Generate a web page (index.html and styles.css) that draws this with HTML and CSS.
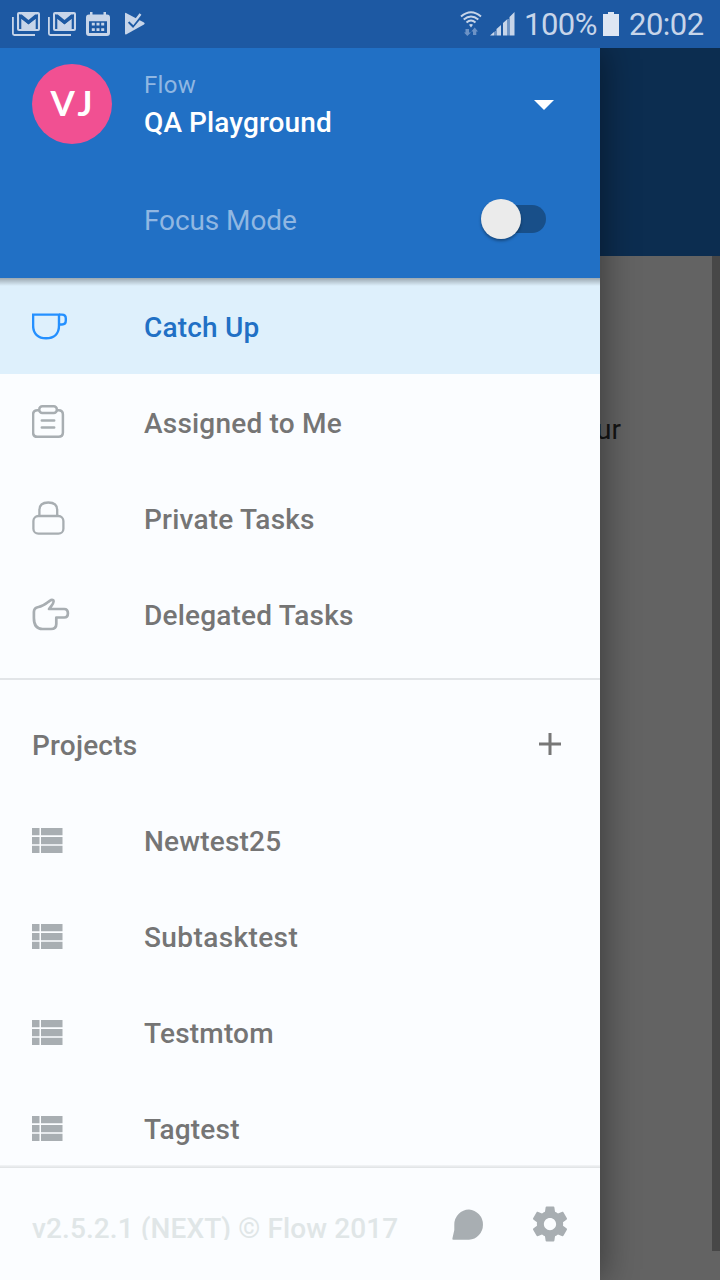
FILE: index.html
```html
<!DOCTYPE html>
<html lang="en">
<head>
<meta charset="utf-8">
<title>Flow</title>
<link rel="stylesheet" href="styles.css">
</head>
<body>
<svg class="defs" width="0" height="0">
  <symbol id="gmail" viewBox="0 0 28 24">
    <path d="M.900 5V21.500Q.900 23 2.400 23H23" fill="none" stroke="currentColor" stroke-width="1.800"/>
    <rect x="5" y="0" width="23" height="19" rx="2" fill="currentColor"/>
    <path d="M8.200 17V4.500L16.500 11L24.800 4.500V17" fill="none" stroke="#1d59a3" stroke-width="2.200"/>
    <path d="M7.100 2.500H9.800L16.500 8L23.200 2.500H25.900V5L16.500 12L7.100 5Z" fill="#1d59a3"/>
  </symbol>
  <symbol id="list" viewBox="0 0 32 26">
    <path fill="currentColor" d="M0 0H7.500V7.200H0ZM9 0H30.500V7.200H9ZM0 9H7.500V16.200H0ZM9 9H30.500V16.200H9ZM0 17.700H7.500V24.900H0ZM9 17.700H30.500V24.900H9Z"/>
  </symbol>
</svg>
<header class="status">
  <div class="status-left">
    <svg width="28" height="24"><use href="#gmail"/></svg>
    <svg class="second-mail" width="28" height="24"><use href="#gmail"/></svg>
    <svg class="calendar" width="24" height="24" viewBox="0 0 24 24">
      <path fill="currentColor" fill-rule="evenodd" d="M3 2.500H4V0H6.500V2.500H17.500V0H20V2.500H21Q24 2.500 24 5.500V21Q24 24 21 24H3Q0 24 0 21V5.500Q0 2.500 3 2.500ZM3 9.300V21H21V9.300Z"/>
      <path fill="currentColor" d="M5.800 10.800H8.800V13.500H5.800ZM10.500 10.800H13.500V13.500H10.500ZM15.200 10.800H18.200V13.500H15.200ZM5.800 16.200H8.800V19H5.800ZM10.500 16.200H13.500V19H10.500ZM15.200 16.200H18.200V19H15.200Z"/>
    </svg>
    <svg class="play" width="22" height="24" viewBox="0 0 22 24">
      <path fill="currentColor" d="M1 1.500Q1 .500 2 1L20 10.500Q21.500 11.500 20 12.500L2.500 22.300Q1 23 1 21.500Z"/>
      <path d="M15 3L20 1L21 6L17.500 7Z" fill="#1d59a3"/>
      <path d="M4.800 9.800L9 14L17.500 4" fill="none" stroke="#1d59a3" stroke-width="2.600"/>
      <path d="M6 8.300L9.200 11.500L16.500 2" fill="none" stroke="currentColor" stroke-width="2.400"/>
    </svg>
  </div>
  <div class="status-right">
    <svg width="22" height="26" viewBox="0 0 22 26">
      <g fill="none" stroke="currentColor" stroke-width="2"><path d="M1 5.500Q11-3 21 5.500"/><path d="M3.700 8.500Q11 2.500 18.300 8.500"/><path d="M6.500 11.500Q11 7.500 15.500 11.500"/></g>
      <path fill="currentColor" d="M9 13.700Q11 12.200 13 13.700L11 16.500Z"/>
      <path fill="#6d93c6" d="M5.500 18H9V21.500H11L7.300 25L4 21.500H5.500ZM13 24V20.500H11.300L14.700 16.500L18 20.500H16.300V24Z"/>
    </svg>
    <svg class="signal" width="26" height="26" viewBox="0 0 26 26">
      <path fill="currentColor" d="M0 24.500L4.500 20.500V24.500ZM6.500 18L11 14V24.500H6.500ZM13 12L17.500 8V24.500H13ZM19.500 6L24.500 1V24.500H19.500Z"/>
      <path fill="#6d93c6" d="M5 20H6V24.500H5ZM18 8H19V24.500H18Z"/>
    </svg>
    <span class="percent">100%</span>
    <svg class="battery" width="16" height="24" viewBox="0 0 16 24"><path fill="#dee6f3" d="M5 0H11V2H16V24H0V2H5Z"/></svg>
    <span class="clock">20:02</span>
  </div>
</header>
<main class="app">
  <section class="page">
    <div class="page-bar"></div>
    <div class="page-body">
      <p class="page-text">ur</p>
      <div class="scrollbar"></div>
    </div>
  </section>
  <aside class="drawer">
    <div class="account">
      <div class="profile">
        <div class="avatar">VJ</div>
        <div class="names">
          <span class="org">Flow</span>
          <span class="team">QA Playground</span>
        </div>
        <svg class="caret" width="20" height="10" viewBox="0 0 20 10"><path fill="#fff" d="M0 0H20L10 10Z"/></svg>
      </div>
      <div class="focus">
        <span class="focus-label">Focus Mode</span>
        <span class="toggle"><span class="knob"></span></span>
      </div>
    </div>
    <nav class="menu">
      <a class="item active">
        <svg class="icon" width="40" height="40" viewBox="0 0 40 40" fill="none" stroke="#2490ff" stroke-width="2.400">
          <path d="M1.100 8.600H27V19.500C27 28 22 32.300 14.100 32.300C6.400 32.300 1.100 28 1.100 19.500Z"/>
          <path d="M27 8.600H30Q33.800 8.600 33.800 12.500V14.500Q33.800 18.500 30 18.500H27"/>
        </svg>
        <span class="label">Catch Up</span>
      </a>
      <a class="item">
        <svg class="icon" width="40" height="40" viewBox="0 0 40 40" fill="none" stroke="currentColor" stroke-width="2.500">
          <path d="M7.500 8.200H5.500Q1.100 8.200 1.100 12.500V30.500Q1.100 34.800 5.500 34.800H26.500Q30.900 34.800 30.900 30.500V12.500Q30.900 8.200 26.500 8.200H24.500"/>
          <rect x="7.300" y="4.300" width="17.500" height="6.700" rx="3"/>
          <path d="M9.800 18.600H22.200M9.800 25.400H22.200" stroke-linecap="round"/>
        </svg>
        <span class="label">Assigned to Me</span>
      </a>
      <a class="item">
        <svg class="icon" width="40" height="40" viewBox="0 0 40 40" fill="none" stroke="currentColor" stroke-width="2.300">
          <rect x="1.400" y="18" width="30" height="17.700" rx="5"/>
          <path d="M7.400 18V12Q7.400 4.500 16.300 4.500Q25.200 4.500 25.200 12V18"/>
        </svg>
        <span class="label">Private Tasks</span>
      </a>
      <a class="item">
        <svg class="icon" width="40" height="40" viewBox="0 0 40 40" fill="none" stroke="currentColor" stroke-width="2.700" stroke-linejoin="round">
          <path d="M17 15H32.200Q35.900 15 35.900 19.300Q35.900 23.500 32.200 23.500H24.300V30Q24.300 35 19 35H10.500Q1.900 35 1.900 24V18Q1.900 13.800 6.500 13C12 12 15 8.600 18 6.600Q20 5.200 21.500 6.600Q22.500 8.300 17 15Z"/>
        </svg>
        <span class="label">Delegated Tasks</span>
      </a>
    </nav>
    <section class="projects">
      <div class="projects-head">
        <span class="label">Projects</span>
        <svg width="22" height="22" viewBox="0 0 22 22"><path d="M11 0V22M0 11H22" stroke="#777" stroke-width="3"/></svg>
      </div>
      <a class="item"><svg class="list-icon" width="32" height="26"><use href="#list"/></svg><span class="label">Newtest25</span></a>
      <a class="item"><svg class="list-icon" width="32" height="26"><use href="#list"/></svg><span class="label wide">Subtasktest</span></a>
      <a class="item"><svg class="list-icon" width="32" height="26"><use href="#list"/></svg><span class="label">Testmtom</span></a>
      <a class="item"><svg class="list-icon" width="32" height="26"><use href="#list"/></svg><span class="label">Tagtest</span></a>
    </section>
    <footer class="foot">
      <span class="version">v2.5.2.1 (NEXT) © Flow 2017</span>
      <svg class="chat" width="32" height="32" viewBox="0 0 32 32"><path fill="currentColor" d="M17 .500A15.200 15.200 0 0 1 17 30.800H1.500Q0 30.800 .400 29.500L2.300 21V15.500A15 15 0 0 1 17 .500Z"/></svg>
      <svg class="gear" width="42" height="42" viewBox="0 0 24 24"><path fill="currentColor" d="M19.430 12.980c.04-.32.07-.64.07-.98s-.03-.66-.07-.98l2.110-1.650c.19-.15.24-.42.12-.64l-2-3.460c-.12-.22-.39-.3-.61-.22l-2.490 1c-.52-.4-1.080-.73-1.690-.98l-.38-2.650C14.460 2.180 14.250 2 14 2h-4c-.25 0-.46.18-.49.42l-.38 2.650c-.61.25-1.170.59-1.690.98l-2.490-1c-.23-.09-.49 0-.61.22l-2 3.460c-.13.22-.07.49.12.64l2.110 1.650c-.04.32-.07.65-.07.98s.03.66.07.98l-2.110 1.650c-.19.15-.24.42-.12.64l2 3.460c.12.22.39.3.61.22l2.490-1c.52.4 1.080.73 1.690.98l.38 2.650c.03.24.24.42.49.42h4c.25 0 .46-.18.49-.42l.38-2.650c.61-.25 1.170-.59 1.690-.98l2.490 1c.23.09.49 0 .61-.22l2-3.460c.12-.22.07-.49-.12-.64l-2.110-1.650zM12 15.500c-1.930 0-3.500-1.570-3.500-3.500s1.570-3.500 3.500-3.500 3.500 1.570 3.500 3.500-1.570 3.500-3.500 3.500z"/></svg>
    </footer>
  </aside>
</main>
</body>
</html>
```

FILE: styles.css
```css
* { box-sizing: border-box; }
body {
  margin: 0;
  width: 720px;
  height: 1280px;
  overflow: hidden;
  font-family: Roboto, "Liberation Sans", sans-serif;
  font-size: 28px;
}
svg { display: block; flex: none; }
.defs { position: absolute; }
.status {
  height: 48px;
  display: flex;
  justify-content: space-between;
  padding: 0 16px 0 12px;
  background: #1d59a3;
  color: #c7d5e9;
}
.status-left { display: flex; align-items: flex-start; padding-top: 12px; }
.second-mail { margin-left: 8px; }
.calendar { margin-left: 10px; }
.play { margin-left: 14px; }
.status-right { display: flex; align-items: center; }
.signal { margin-left: 8px; }
.percent, .clock { font-size: 31px; line-height: 46px; padding-top: 2px; letter-spacing: -0.5px; }
.percent { margin-left: 8px; width: 72px; }
.battery { margin-left: 7px; }
.clock { margin-left: 10px; width: 75px; }
.app { position: relative; height: 1232px; overflow: hidden; }
.page-bar { height: 208px; background: #0c2d50; }
.page-body {
  height: 1024px;
  display: flex;
  justify-content: space-between;
  background: #636363;
}
.page-text { margin: 157px 0 0 596px; line-height: 33px; color: #151515; }
.scrollbar { width: 8px; height: 995px; background: #474747; }
.drawer {
  position: absolute;
  inset: 0 120px 0 0;
  display: flex;
  flex-direction: column;
  background: #fbfdff;
  box-shadow: 4px 0 32px rgba(0, 0, 0, 0.4);
}
.account { height: 230px; flex: none; background: #2170c5; }
.profile { display: flex; align-items: center; height: 112px; padding: 0 46px 0 32px; }
.avatar {
  width: 80px;
  height: 80px;
  border-radius: 50%;
  background: #f15092;
  color: #fff;
  font: 700 35px/77px Lato, sans-serif;
  letter-spacing: 5px;
  padding-left: 4px;
  text-align: center;
}
.names { display: flex; flex-direction: column; margin-left: 32px; flex: 1; }
.org { font-size: 24px; line-height: 36px; color: #90b7e2; letter-spacing: 0.3px; }
.team { font-weight: 500; line-height: 36px; padding-top: 2px; color: #fff; letter-spacing: 0.1px; }
.caret { margin-top: 1px; }
.focus {
  display: flex;
  align-items: center;
  justify-content: space-between;
  height: 118px;
  padding: 0 54px 0 144px;
}
.focus-label { color: #90b7e2; line-height: 34px; padding-top: 3px; letter-spacing: -0.1px; }
.toggle { width: 60px; height: 28px; border-radius: 14px; background: #184f89; }
.knob {
  display: block;
  width: 40px;
  height: 40px;
  margin: -6px 0 0 -5px;
  border-radius: 50%;
  background: #ebebeb;
  box-shadow: 0 2px 3px rgba(0, 0, 0, 0.35);
}
.menu { flex: none; height: 402px; border-bottom: 2px solid #e2e5e8; }
.item {
  display: flex;
  align-items: center;
  height: 96px;
  padding-left: 32px;
  color: #a8aeb2;
}
.label { font-weight: 500; line-height: 34px; padding-top: 4px; color: #757575; letter-spacing: 0.2px; }
.wide { letter-spacing: 0.4px; }
.icon { margin-right: 72px; }
.list-icon { margin: 2px 80px 0 0; }
.active { background: linear-gradient(rgba(0, 0, 0, 0.3), rgba(0, 0, 0, 0)) 0 0 / 100% 8px no-repeat #def0fc; }
.active .label { color: #2170c5; }
.projects { flex: 1; min-height: 0; overflow: hidden; padding-top: 16px; }
.projects-head {
  display: flex;
  align-items: center;
  justify-content: space-between;
  height: 96px;
  padding: 0 39px 0 32px;
}
.foot {
  flex: none;
  display: flex;
  align-items: center;
  height: 115px;
  padding: 2px 29px 0 32px;
  background: linear-gradient(#f3f5f7, #dfe2e4) 0 0 / 100% 3px no-repeat #fbfdff;
  color: #a8aeb2;
}
.version {
  width: 420px;
  height: 32px;
  margin-top: 1px;
  overflow: hidden;
  font-weight: 500;
  line-height: 41px;
  letter-spacing: 0.1px;
  color: #e0e6e7;
  white-space: nowrap;
}
.chat { margin: 2px 0 0 0; }
.gear { margin-left: 45px; }
```
